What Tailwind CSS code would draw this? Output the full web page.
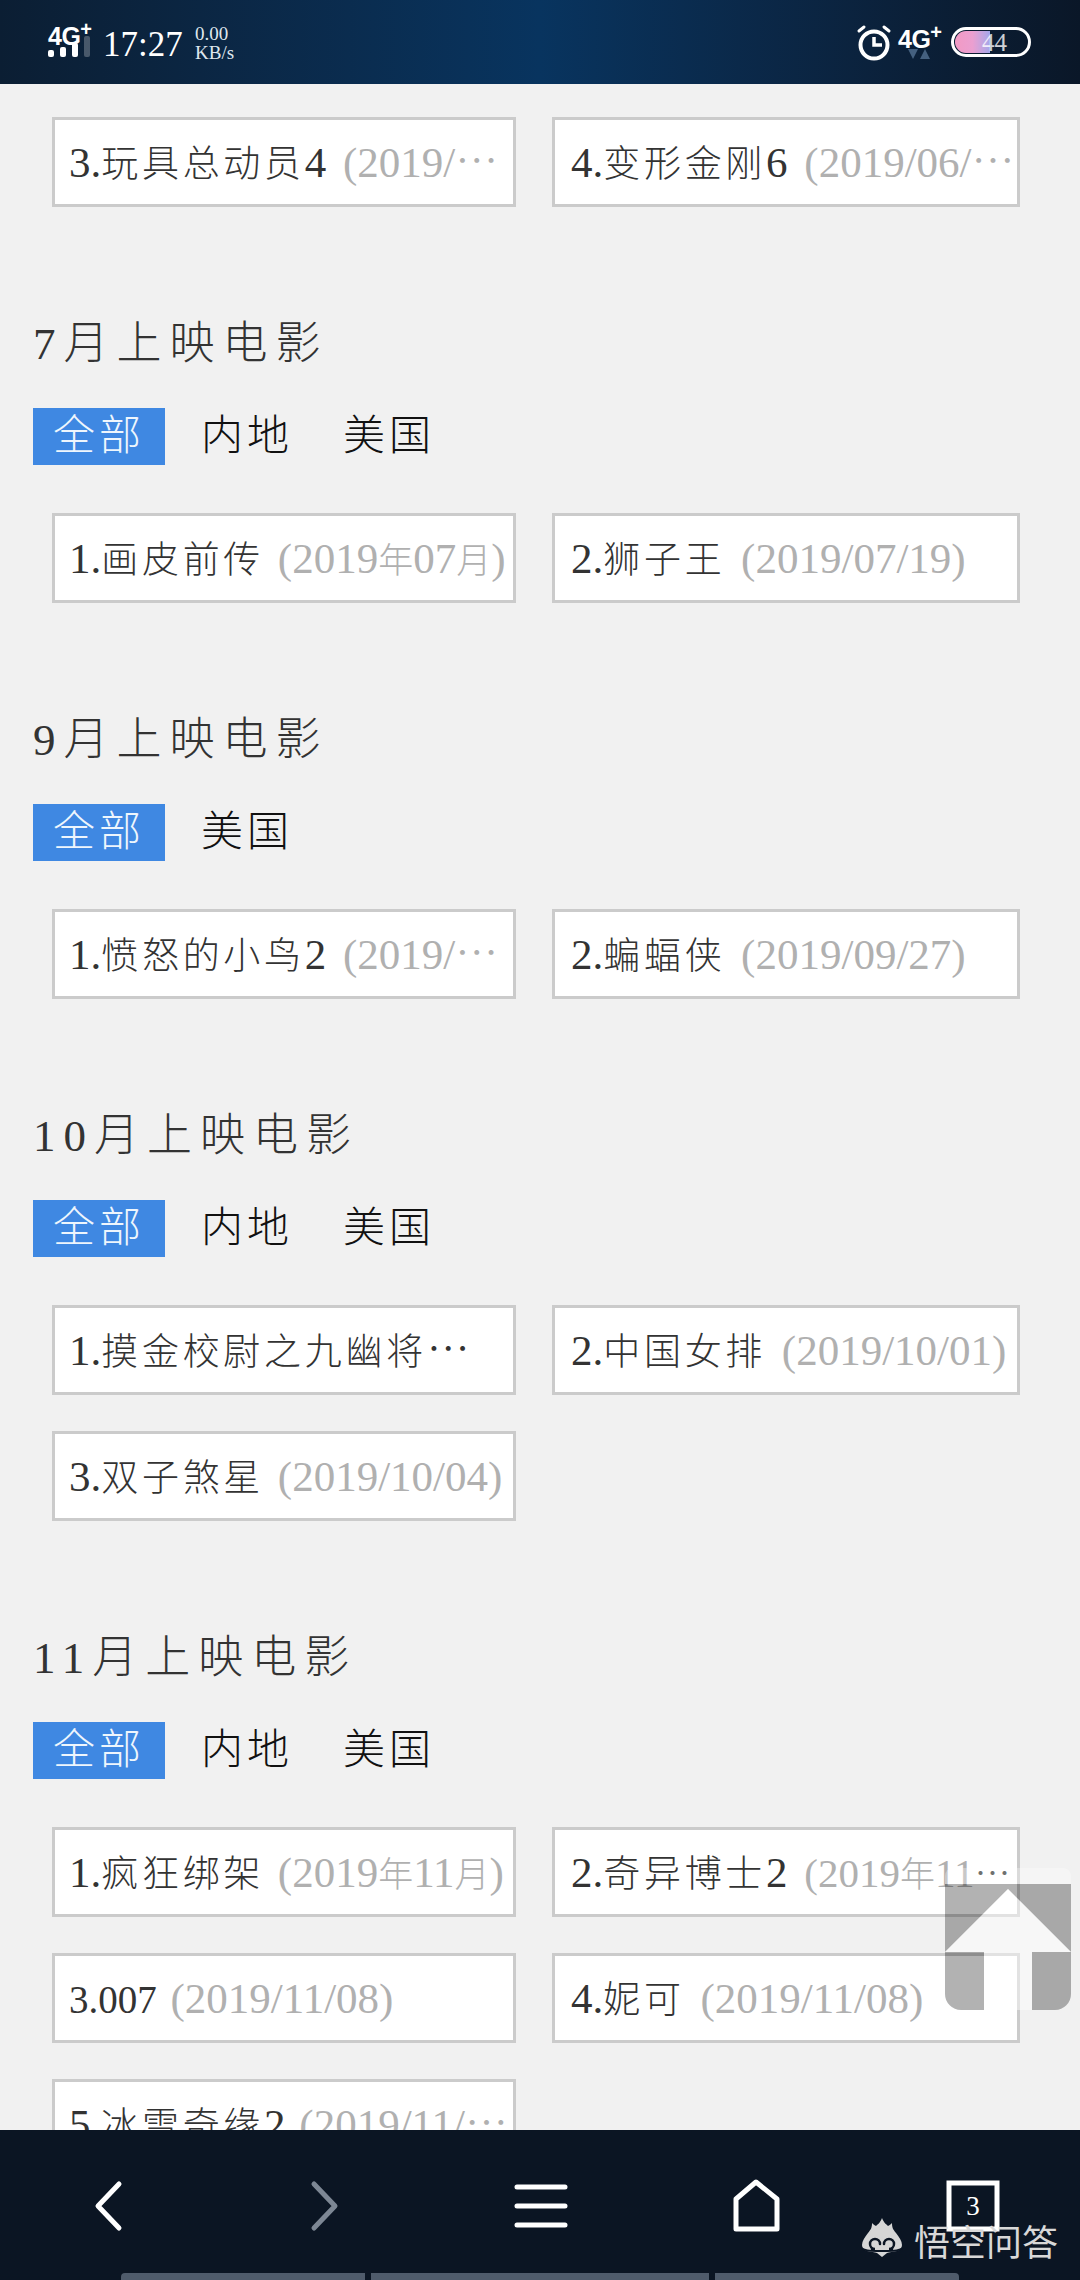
<!DOCTYPE html>
<html lang="zh-CN">
<head>
  <meta charset="UTF-8">
  <title>上映电影</title>
  <script src="https://cdn.jsdelivr.net/npm/@tailwindcss/browser@4"></script>
</head>
<body class="bg-[#f1f1f1]">
<div class="relative w-[1080px] h-[2280px] overflow-hidden flex flex-col font-['Liberation_Serif','Noto_Sans_CJK_SC',serif]">

  <!-- Status bar -->
  <header class="relative h-[84px] shrink-0 text-white bg-gradient-to-r from-[#0b1e33] via-[#08345f] to-[#0a1728]">
    <div class="absolute left-[48px] top-[19px] font-['Liberation_Sans',sans-serif] font-bold text-[25px] leading-[25px] tracking-[-0.5px]">4G<sup class="text-[20px] leading-none align-[9px] top-0">+</sup></div>
    <div class="absolute left-[48px] top-[33px] h-[24px] flex items-end gap-[6px]">
      <div class="w-[6px] h-[7px] rounded-[2px] bg-white"></div>
      <div class="w-[6px] h-[10px] rounded-[2px] bg-white"></div>
      <div class="w-[6px] h-[14px] rounded-[2px] bg-white"></div>
      <div class="w-[6px] h-[21px] rounded-[2px] bg-white/25"></div>
    </div>
    <div class="absolute left-[103px] top-[25px] text-[35px] leading-[40px]">17:27</div>
    <div class="absolute left-[195px] top-[24px] text-[19px] leading-[19px] text-[#dfe6ee]">0.00<br>KB/s</div>

    <svg class="absolute left-[856px] top-[24px]" width="36" height="38" viewBox="0 0 36 38" fill="none" stroke="white" stroke-linecap="round">
      <circle cx="18" cy="21" r="13.5" stroke-width="4"/>
      <path d="M18 13v8h8" stroke-width="3.5" stroke-linecap="butt"/>
      <path d="M3 7l5-4M33 7l-5-4" stroke-width="3"/>
    </svg>
    <div class="absolute left-[898px] top-[22px] font-['Liberation_Sans',sans-serif] font-bold text-[25px] leading-[25px] tracking-[-0.5px]">4G<sup class="text-[20px] leading-none align-[9px] top-0">+</sup></div>
    <svg class="absolute left-[908px] top-[49px]" width="22" height="10" viewBox="0 0 22 10" fill="#44607f">
      <path d="M0 0h10L5 10zM12 10L17 0l5 10z"/>
    </svg>
    <div class="absolute left-[951px] top-[27px] w-[80px] h-[30px] rounded-full border-[3px] border-white overflow-hidden">
      <div class="mt-[1px] ml-[1px] w-[35px] h-[22px] rounded-l-full bg-gradient-to-r from-[#f29ac4] via-[#eb9fd0] to-[#a4a6ea]"></div>
    </div>
    <div class="absolute left-[982px] top-[29px] text-[25px] leading-[27px] text-white/80">44</div>
  </header>

  <!-- Page content, cut off by the bottom bar -->
  <main class="flex-1 min-h-0 overflow-hidden pt-[33px] pl-[33px] text-[43px] text-[#333] font-light">
    <div class="ml-[19px] grid grid-cols-[464px_468px] gap-x-[36px] gap-y-[36px]">
      <div class="h-[90px] bg-white border-[3px] border-[#cbcbcb] pl-[14px] leading-[86px] whitespace-nowrap overflow-hidden">3.<span class="text-[37px] tracking-[3.7px]">玩具总动员</span>4 <span class="ml-[6px] text-[#b0b0b0]">(2019/⋯</span></div>
      <div class="h-[90px] bg-white border-[3px] border-[#cbcbcb] pl-[16px] leading-[86px] whitespace-nowrap overflow-hidden">4.<span class="text-[37px] tracking-[3.7px]">变形金刚</span>6 <span class="ml-[6px] text-[#b0b0b0]">(2019/06/⋯</span></div>
    </div>

    <section>
      <h2 class="mt-[107px] h-[60px] leading-[60px] text-[45px] tracking-[8px] font-light">7月上映电影</h2>
      <div class="mt-[34px] h-[57px] flex items-center text-[42px] tracking-[4px] text-[#111]">
        <div class="w-[132px] h-[57px] leading-[57px] text-center bg-[#3f88e2] text-[#eef6fd]">全部</div>
        <div class="ml-[11px] flex text-center"><div class="w-[142px]">内地</div><div class="w-[142px]">美国</div></div>
      </div>
      <div class="mt-[48px] ml-[19px] grid grid-cols-[464px_468px] gap-x-[36px] gap-y-[36px]">
        <div class="h-[90px] bg-white border-[3px] border-[#cbcbcb] pl-[14px] leading-[86px] whitespace-nowrap overflow-hidden">1.<span class="text-[37px] tracking-[3.7px]">画皮前传</span> <span class="ml-[3px] text-[#b0b0b0]">(2019<span class="text-[35px]">年</span>07<span class="text-[35px]">月</span>)</span></div>
        <div class="h-[90px] bg-white border-[3px] border-[#cbcbcb] pl-[16px] leading-[86px] whitespace-nowrap overflow-hidden">2.<span class="text-[37px] tracking-[3.7px]">狮子王</span> <span class="ml-[5px] text-[#b0b0b0]">(2019/07/19)</span></div>
      </div>
    </section>

    <section>
      <h2 class="mt-[107px] h-[60px] leading-[60px] text-[45px] tracking-[8px] font-light">9月上映电影</h2>
      <div class="mt-[34px] h-[57px] flex items-center text-[42px] tracking-[4px] text-[#111]">
        <div class="w-[132px] h-[57px] leading-[57px] text-center bg-[#3f88e2] text-[#eef6fd]">全部</div>
        <div class="ml-[11px] flex text-center"><div class="w-[142px]">美国</div></div>
      </div>
      <div class="mt-[48px] ml-[19px] grid grid-cols-[464px_468px] gap-x-[36px] gap-y-[36px]">
        <div class="h-[90px] bg-white border-[3px] border-[#cbcbcb] pl-[14px] leading-[86px] whitespace-nowrap overflow-hidden">1.<span class="text-[37px] tracking-[3.7px]">愤怒的小鸟</span>2 <span class="ml-[6px] text-[#b0b0b0]">(2019/⋯</span></div>
        <div class="h-[90px] bg-white border-[3px] border-[#cbcbcb] pl-[16px] leading-[86px] whitespace-nowrap overflow-hidden">2.<span class="text-[37px] tracking-[3.7px]">蝙蝠侠</span> <span class="ml-[5px] text-[#b0b0b0]">(2019/09/27)</span></div>
      </div>
    </section>

    <section>
      <h2 class="mt-[107px] h-[60px] leading-[60px] text-[45px] tracking-[8px] font-light">10月上映电影</h2>
      <div class="mt-[34px] h-[57px] flex items-center text-[42px] tracking-[4px] text-[#111]">
        <div class="w-[132px] h-[57px] leading-[57px] text-center bg-[#3f88e2] text-[#eef6fd]">全部</div>
        <div class="ml-[11px] flex text-center"><div class="w-[142px]">内地</div><div class="w-[142px]">美国</div></div>
      </div>
      <div class="mt-[48px] ml-[19px] grid grid-cols-[464px_468px] gap-x-[36px] gap-y-[36px]">
        <div class="h-[90px] bg-white border-[3px] border-[#cbcbcb] pl-[14px] leading-[86px] whitespace-nowrap overflow-hidden">1.<span class="text-[37px] tracking-[3.7px]">摸金校尉之九幽将</span>⋯</div>
        <div class="h-[90px] bg-white border-[3px] border-[#cbcbcb] pl-[16px] leading-[86px] whitespace-nowrap overflow-hidden">2.<span class="text-[37px] tracking-[3.7px]">中国女排</span> <span class="ml-[5px] text-[#b0b0b0]">(2019/10/01)</span></div>
        <div class="h-[90px] bg-white border-[3px] border-[#cbcbcb] pl-[14px] leading-[86px] whitespace-nowrap overflow-hidden">3.<span class="text-[37px] tracking-[3.7px]">双子煞星</span> <span class="ml-[3px] text-[#b0b0b0]">(2019/10/04)</span></div>
      </div>
    </section>

    <section>
      <h2 class="mt-[107px] h-[60px] leading-[60px] text-[45px] tracking-[8px] font-light">11月上映电影</h2>
      <div class="mt-[34px] h-[57px] flex items-center text-[42px] tracking-[4px] text-[#111]">
        <div class="w-[132px] h-[57px] leading-[57px] text-center bg-[#3f88e2] text-[#eef6fd]">全部</div>
        <div class="ml-[11px] flex text-center"><div class="w-[142px]">内地</div><div class="w-[142px]">美国</div></div>
      </div>
      <div class="mt-[48px] ml-[19px] grid grid-cols-[464px_468px] gap-x-[36px] gap-y-[36px]">
        <div class="h-[90px] bg-white border-[3px] border-[#cbcbcb] pl-[14px] leading-[86px] whitespace-nowrap overflow-hidden">1.<span class="text-[37px] tracking-[3.7px]">疯狂绑架</span> <span class="ml-[3px] text-[#b0b0b0]">(2019<span class="text-[35px]">年</span>11<span class="text-[35px]">月</span>)</span></div>
        <div class="h-[90px] bg-white border-[3px] border-[#cbcbcb] pl-[16px] leading-[86px] whitespace-nowrap overflow-hidden">2.<span class="text-[37px] tracking-[3.7px]">奇异博士</span>2 <span class="ml-[6px] text-[41px] text-[#b0b0b0]">(2019<span class="text-[35px]">年</span>11</span><span class="text-[36px]">⋯</span></div>
        <div class="h-[90px] bg-white border-[3px] border-[#cbcbcb] pl-[14px] leading-[86px] whitespace-nowrap overflow-hidden"><span class="text-[39px]">3.007</span> <span class="ml-[3px] text-[#b0b0b0]">(2019/11/08)</span></div>
        <div class="h-[90px] bg-white border-[3px] border-[#cbcbcb] pl-[16px] leading-[86px] whitespace-nowrap overflow-hidden">4.<span class="text-[37px] tracking-[3.7px]">妮可</span> <span class="ml-[5px] text-[#b0b0b0]">(2019/11/08)</span></div>
        <div class="h-[90px] bg-white border-[3px] border-[#cbcbcb] pl-[14px] leading-[86px] whitespace-nowrap overflow-hidden">5.<span class="text-[37px] tracking-[3.7px]">冰雪奇缘</span>2 <span class="ml-[3px] text-[#b0b0b0]">(2019/11/⋯</span></div>
      </div>
    </section>
  </main>

  <!-- Back to top button: dark plate with the arrow cut out, arrow and top band lightly white -->
  <svg class="absolute left-[945px] top-[1868px]" width="126" height="142" viewBox="0 0 126 142">
    <path fill-rule="evenodd" d="M0 16h126v110a16 16 0 0 1-16 16H16a16 16 0 0 1-16-16zM63 21L0 84H39V142H87V84H126z" fill="#000" fill-opacity="0.3"/>
    <path d="M8 0h110a8 8 0 0 1 8 8v8H0V8a8 8 0 0 1 8-8z" fill="#fff" fill-opacity="0.3"/>
    <path d="M63 21L126 84H87V142H39V84H0z" fill="#fff" fill-opacity="0.45"/>
  </svg>

  <!-- Bottom bar -->
  <footer class="relative h-[150px] shrink-0 bg-[#0b1523]">
    <svg class="absolute inset-0" width="1080" height="150" viewBox="0 0 1080 150" fill="none" stroke-linecap="round" stroke-linejoin="round">
      <path d="M119 54L98 76l21 22" stroke="#fff" stroke-width="5"/>
      <path d="M314 54l21 22-21 22" stroke="#7d8794" stroke-width="5"/>
      <path d="M517 57h48M517 76h48M517 95h48" stroke="#fff" stroke-width="5"/>
      <path d="M756 52l21 17v30h-41V69z" stroke="#fff" stroke-width="5"/>
      <rect x="949" y="53" width="48" height="46" stroke="#fff" stroke-width="5" stroke-linejoin="miter"/>
    </svg>
    <div class="absolute left-[947px] top-[51px] w-[52px] h-[50px] text-center text-white text-[27px] leading-[50px]">3</div>

    <!-- Watermark -->
    <svg class="absolute left-[860px] top-[87px]" width="44" height="42" viewBox="0 0 44 42">
      <path d="M22 1c2 5 4 6 6 8 2-1 3-2 4-3 0 5 1 6 4 10 3 4 6 8 6 12 0 3-2 5-5 6-4 1-8 1-10 2l-5 4-5-4c-2-1-6-1-10-2-3-1-5-3-5-6 0-4 3-8 6-12 3-4 4-5 4-10 1 1 2 2 4 3 2-2 4-3 6-8z" fill="#d6d6d6"/>
      <path d="M20 27a5 5 0 1 0-5 5h-3M24 27a5 5 0 1 1 5 5h3" fill="none" stroke="#0b1523" stroke-width="2.5" stroke-linecap="round"/>
      <path d="M1 31c6 4 14 3 21 3s15 1 21-3" fill="none" stroke="#0b1523" stroke-width="2"/>
    </svg>
    <div class="absolute left-[914px] top-[88px] font-['Noto_Sans_CJK_SC',sans-serif] text-[36px] leading-[44px] text-[#d8d8d8] whitespace-nowrap">悟空问答</div>

    <!-- Scroll indicator -->
    <div class="absolute bottom-0 left-[121px] h-[7px] flex gap-[6px]">
      <div class="w-[244px] rounded-tl-[4px] bg-[#4f5b6b]"></div>
      <div class="w-[338px] bg-[#4f5b6b]"></div>
      <div class="w-[244px] rounded-tr-[4px] bg-[#4f5b6b]"></div>
    </div>
  </footer>
</div>
</body>
</html>
